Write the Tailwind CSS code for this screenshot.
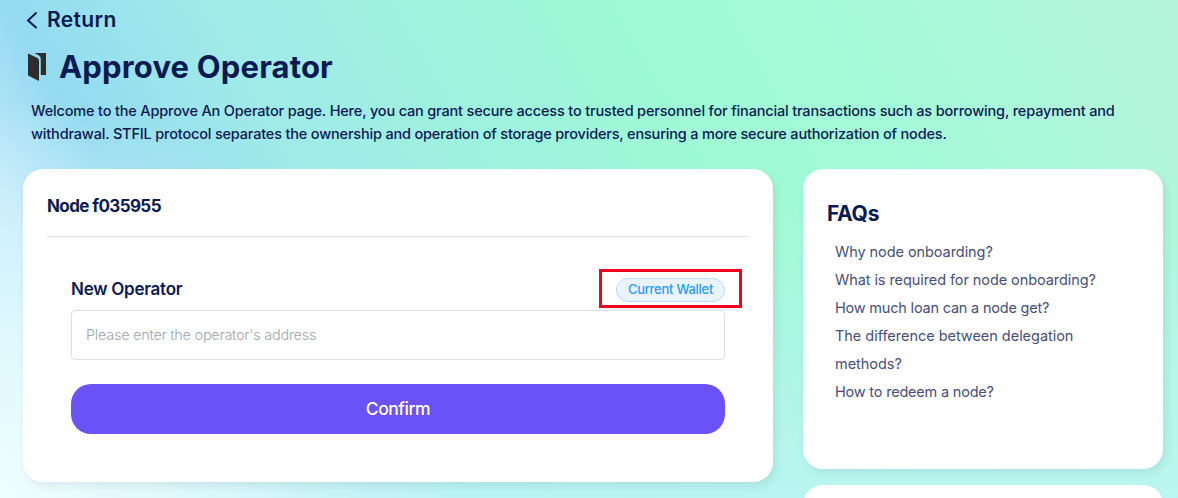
<!DOCTYPE html>
<html lang="en">
<head>
<meta charset="utf-8">
<title>Approve Operator</title>
<script src="https://cdn.jsdelivr.net/npm/@tailwindcss/browser@4"></script>
</head>
<body class="h-[498px] w-[1178px] overflow-hidden font-['Inter',sans-serif] text-[#0b1a51] bg-[radial-gradient(ellipse_460px_400px_at_0px_498px,#f0feff_0%,#e4fafee6_35%,#c8f0fa00_100%),linear-gradient(to_top,#bef5f5dd_0%,#bef5f500_60%),linear-gradient(60deg,#d0eefc_0%,#c0e8fa_12%,#94daf1_20%,#a0e9ea_32%,#9ef1df_46%,#9ffad5_62%,#a4fad8_76%,#b6f5dd_100%)]">
<header class="flex h-[169px] flex-col">
  <a class="flex h-10 items-center pl-[26px] text-[21px] font-semibold">
    <svg class="mr-[9px] h-[18px] w-3" viewBox="0 0 12 18" fill="none" stroke="currentColor" stroke-width="2" stroke-linecap="round" stroke-linejoin="round"><path d="M10 2 2 9.500l8 7"/></svg>
    <span class="tracking-[0.35px]">Return</span>
  </a>
  <h1 class="flex h-[54px] items-center pl-7 text-[31px] font-bold">
    <svg class="mr-[13px] h-7 w-[18px]" viewBox="0 0 18 28" fill="#2d2d2d"><path d="M0 .5 9.500 5Q11 6 11 8V28L0 22.500Z"/><path d="M6.500 0H18v22h-5.200V6Q12.800 3.500 11 2.500Z"/></svg>
    <span class="tracking-[0.17px]">Approve Operator</span>
  </h1>
  <p class="pl-[31px] pt-[5px] text-[14.5px] font-medium leading-[23px] whitespace-nowrap"><span class="tracking-[-0.168px]">Welcome to the Approve An Operator page. Here, you can grant secure access to trusted personnel for financial transactions such as borrowing, repayment and</span><br><span class="tracking-[-0.18px]">withdrawal. STFIL protocol separates the ownership and operation of storage providers, ensuring a more secure authorization of nodes.</span></p>
</header>
<main class="flex h-[329px] items-start gap-[30px] overflow-hidden pl-[23px]">
  <section class="h-[313px] w-[750px] rounded-[20px] bg-white px-6 shadow-[3px_4px_10px_#00000014]">
    <h2 class="h-[68px] border-b border-[#dfe0e2] pt-6 text-[17px] font-bold leading-[26px]"><span class="tracking-[-0.6px]">Node f035955</span></h2>
    <div class="px-6 pt-[32px]">
      <div class="flex h-[41px] items-start justify-between">
        <label class="pt-2 text-[17px] font-semibold leading-6"><span class="tracking-[-0.25px]">New Operator</span></label>
        <div class="-mr-[17px] flex h-[39px] w-[143px] items-center justify-center border-3 border-[#ee0420]">
          <button class="mt-[3px] flex h-6 w-[109px] items-center justify-center rounded-full border border-[#b9dcfa] bg-[#e9f4ff] text-[13px] font-medium text-[#2b9cf2]"><span class="tracking-[-0.27px]">Current Wallet</span></button>
        </div>
      </div>
      <div class="flex h-[50px] items-center rounded border border-[#dcdfe2] pl-[14px] text-[14.5px] font-light text-[#a3a6ae]"><span class="tracking-[-0.27px]">Please enter the operator's address</span></div>
      <button class="mt-6 flex h-[50px] w-full items-center justify-center rounded-[20px] bg-[#6a51f8] pt-px text-[17.5px] font-medium text-white"><span class="tracking-[-0.45px]">Confirm</span></button>
    </div>
  </section>
  <aside class="flex w-[360px] flex-col gap-4">
    <section class="h-[300px] shrink-0 rounded-[20px] bg-white px-6 pt-[30px] shadow-[3px_4px_10px_#00000014]">
      <h2 class="text-[21px] font-bold leading-[30px]"><span class="tracking-[-0.3px]">FAQs</span></h2>
      <ul class="pl-2 pt-[9px] text-[14.5px] leading-7 text-[#474f78]">
        <li><span class="tracking-[-0.07px]">Why node onboarding?</span></li>
        <li><span class="tracking-[-0.08px]">What is required for node onboarding?</span></li>
        <li><span class="tracking-[-0.2px]">How much loan can a node get?</span></li>
        <li><span class="tracking-[-0.03px]">The difference between delegation<br>methods?</span></li>
        <li><span class="tracking-[-0.2px]">How to redeem a node?</span></li>
      </ul>
    </section>
    <section class="h-[13px] shrink-0 overflow-hidden"><div class="h-10 rounded-t-[20px] bg-white"></div></section>
  </aside>
</main>
</body>
</html>
